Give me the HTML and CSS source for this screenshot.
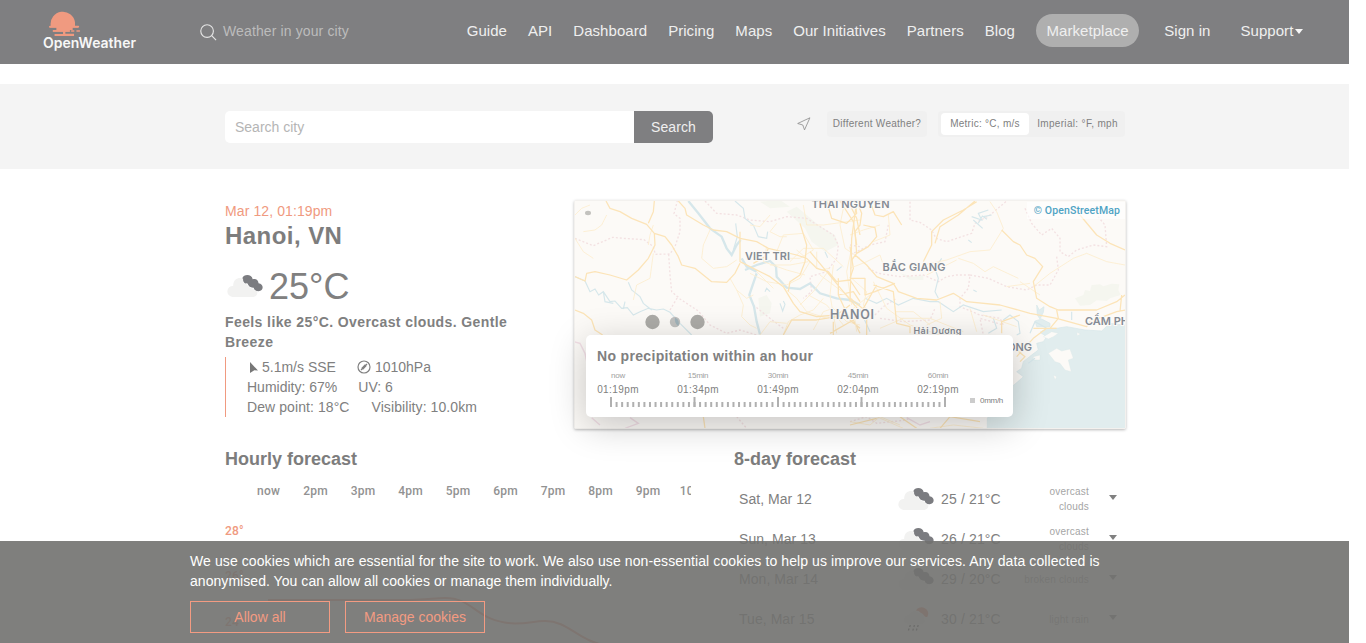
FILE: index.html
```html
<!DOCTYPE html>
<html lang="en">
<head>
<meta charset="utf-8">
<title>OpenWeather - Hanoi, VN</title>
<link rel="stylesheet" href="styles.css">
</head>
<body>
<svg width="0" height="0" class="defs">
  <symbol id="clouds" viewBox="0 0 105 68">
    <path fill="#7b7c80" d="M45 11 C48 -1 72 -2 75 14 C85 11 92 18 92 26 C108 27 108 49 92 49 C83 49 79 45 78 39 C68 40 62 34 60 27 C55 25 52 30 50 24 C46 21 44 16 45 11Z"/>
    <path fill="#f2f2f1" d="M16 66 A16 16 0 0 1 18 34 C18 10 38 8 47 13 C46 21 50 29 58 27 C61 37 68 42 77 41 C79 47 84 49 88 49 A13 13 0 0 1 77 66Z"/>
  </symbol>
  <symbol id="rain" viewBox="0 0 105 78">
    <path fill="#f39175" d="M52 16 A19 18 0 1 1 86 34 Q79 36 76 31 Q70 30 66 22 Q61 16 52 16Z"/>
    <path fill="#f2f2f1" d="M27 54 A12 12 0 0 1 31 30 A17 17 0 0 1 61 24 A12 12 0 0 1 76 40 Q82 52 72 54Z"/>
    <path stroke="#48484a" stroke-width="4" stroke-dasharray="6 5" d="M36 58l-6 17M48 58l-5 17M59 58l-6 17" fill="none"/>
  </symbol>
</svg>
<div class="page">
  <header class="header">
    <svg class="logo" viewBox="0 0 282 124">
      <path fill="#f09a80" d="M23 44 A36.500 36.500 0 1 1 96 34 V45 H106 V50 H89 V57 H80 V62 H67 V68 H93 V75 H35 V69 H60 V62 H30 V57 H40 V50 H19 V45 H23Z"/>
      <path stroke="#f09a80" stroke-width="5" stroke-linecap="round" d="M21 47h85M31 60h48M86 60h6M102 60h7M37 72h54"/>
      <text x="0" y="112" textLength="279" lengthAdjust="spacingAndGlyphs">OpenWeather</text>
    </svg>
    <div class="finder">
      <svg viewBox="0 0 18 18"><circle cx="7.500" cy="7.500" r="6.700"/><path d="M12.400 12.400L17 17"/></svg>
      <span>Weather in your city</span>
    </div>
    <nav class="nav">
      <a>Guide</a><a>API</a><a>Dashboard</a><a>Pricing</a><a>Maps</a><a>Our Initiatives</a><a>Partners</a><a>Blog</a>
      <a class="pill">Marketplace</a><a class="signin">Sign in</a><a class="support">Support<i class="caret"></i></a>
    </nav>
  </header>

  <section class="searchband">
    <div class="searchbox"><div class="field">Search city</div><div class="button">Search</div></div>
    <div class="controls">
      <svg class="locate" viewBox="0 0 14 14"><path d="M.7 6.500L12.900.8L7.500 12.900L5.800 8Z"/></svg>
      <div class="different">Different Weather?</div>
      <div class="units"><span class="on">Metric: °C, m/s</span><span class="off">Imperial: °F, mph</span></div>
    </div>
  </section>

  <main class="main">
    <section class="current">
      <div class="facts">
        <div class="date">Mar 12, 01:19pm</div>
        <h2>Hanoi, VN</h2>
        <div class="temp"><svg class="cloud"><use href="#clouds"/></svg><span>25°C</span></div>
        <div class="feels">Feels like 25°C. Overcast clouds. Gentle Breeze</div>
        <div class="details">
          <div class="line">
            <span class="wind"><svg viewBox="0 0 8 11"><path d="M0 0L8 8.500L4.300 8.200L0 11Z"/></svg>5.1m/s SSE</span>
            <span class="pressure"><svg viewBox="0 0 14 14"><circle cx="7" cy="7" r="6"/><path d="M4 10L10 4"/><path class="hand" d="M5.200 8.800L8.800 5.200"/></svg>1010hPa</span>
          </div>
          <div class="line"><span>Humidity: 67%</span><span>UV: 6</span></div>
          <div class="line"><span>Dew point: 18°C</span><span>Visibility: 10.0km</span></div>
        </div>
      </div>

      <div class="map">
        <svg class="mapart" viewBox="0 0 550 227">
          <rect width="550" height="227" fill="#fcfaf7"/>
          <g transform="translate(-5 -6) scale(.33333)">
            <path class="green" d="M650 50l30-15 30 25 35 30 50 30 10 30-40 20-40-30-20-40zM565 310l25-10 15 25-5 30-30 10zM570 20l60-5 30 20-60 5z"/>
            <path class="border" d="M15 130L70 152L128 127L160 130L190 132L222 134L250 155L256 178L300 177L315 155L330 110L330 70L312 56L322 18M296 178L300 240L305 290L330 312L385 348L420 390L470 415L510 405L560 420M300 345L325 303M405 18L440 55L500 60L540 75L600 80L650 65L710 70L750 95L790 120L805 150L800 190L770 230L720 245L725 290L700 310M550 330L600 370L640 400M500 665L530 700M840 150L870 155"/>
            <path class="pinkline" d="M12 440L30 445L45 475L50 500M65 668L90 690M180 668L205 685L165 700"/>
            <path class="river wide" d="M355 18L385 55L420 100L455 125L470 160L485 180L500 150L512 135M515 190L530 215L560 230M560 235L548 270L538 300L552 335L560 380L570 418M525 225L560 210L600 198L618 215L620 245L650 278L690 282L720 265L750 295L800 310L840 315L870 330"/>
            <path class="river" d="M15 245L45 258L60 290L75 282L86 300L100 290L120 320L135 318L155 340L172 338L190 360L210 350L235 340L260 345L280 342L300 352L330 385L365 420M100 290L105 320L130 325M175 262L185 285L210 305L220 325L245 345M160 342L165 320M495 18L520 40L525 70L550 90L565 125L590 130L593 110M585 290L590 280L600 290M630 325L638 348L645 328L640 318M765 170l8 18M815 215l-15 12M490 165l12-40-5-40"/>
            <path class="road small" d="M15 130L40 170L70 190M110 60L95 90L75 105L40 110M250 90L240 120L235 150M190 315L200 270L240 250L250 175M15 60L35 40L60 30M420 105L400 150L395 190L430 220L470 215L500 195M480 250L500 285L530 310L550 300M500 285L520 330L515 365L540 390L560 400M570 420L600 380L650 385M600 60L570 95L540 90M620 85L600 110L630 125L650 125M600 210L660 210L715 200M700 30L710 90L760 90L870 75M640 420L655 380L690 360L730 345L760 310M650 285L680 310L710 350L770 370M540 235L590 260L650 270L690 250L720 200M820 40L810 90L825 160L870 190M730 405L760 350L790 340L830 380L870 390"/>
            <path class="road small" d="M590 155L580 200L650 225L705 240M640 120L620 170L650 190L690 190L730 165L700 115L640 120M660 200L700 160L760 160L820 215M680 165L750 225L780 220M740 170L740 220M560 230L610 280M770 235L730 290L690 330M715 300L770 330L820 390M790 210L780 300L800 415M750 240L850 315M845 160L830 230L845 330"/>
            <path class="road" d="M108 18L120 40L150 50L185 70L230 88L253 115L285 125L305 150L325 185L335 210L375 220L425 260L470 262L495 235L510 205M235 85L250 50L253 18M253 115L255 150L235 190L205 225L170 255L120 240L75 230L50 235L45 258L15 245M15 345L40 355L65 375L75 405L98 420M325 18L345 40L350 60L400 90L430 105L470 110L510 130L560 140L595 160L680 180L710 190L740 220L775 230L800 260L840 255L870 300M510 110V200L550 220L600 245L640 275L670 325L690 350L740 365L800 360L840 330M595 160L585 185L550 205M655 290L660 260L690 240L705 200L710 150L690 85M640 420L665 375L740 375L830 360M770 18L785 70L830 85L860 55L855 18M835 20L860 70L870 120M810 18L850 80L860 150M840 155L850 220L840 250M805 250V300L850 290L870 320M805 300L840 375L870 400M720 170L770 230L870 350M500 490L510 465M400 665L405 700M790 380v40M780 415l70-40 20 40"/>
          </g>
          <g transform="translate(275 -6) scale(.33333)">
            <path class="water" d="M870 400L820 390L780 385L755 408L705 405L650 395L620 400L590 400L570 412L590 425L580 440L560 445L565 465L545 480L520 500L515 520L500 530L520 545L515 550L480 580L460 610L440 625L412 670V710H870ZM555 378L575 372L600 385L600 395L560 395ZM560 330L568 345L582 335L580 352L570 372L562 360Z"/>
            <path class="land" d="M595 475L620 460L635 468L660 462L670 490L655 495L660 515L664 530L645 525L630 505L615 500ZM580 425L605 410L625 415L610 425L595 432ZM550 485L570 480L570 495H550ZM610 540l10 5-5 10zM680 412l12 5-10 5z"/>
            <path class="green" d="M675 310L700 300L705 285L720 288L725 270L750 268L760 274L785 266L808 268L805 285L812 300L780 310L770 318L740 316L720 330L690 332Z"/>
            <path class="green" d="M150 235L190 245L220 240L220 255L180 255Z"/>
            <path class="border" d="M180 20V75L210 82L245 105L258 130L290 140L320 130L365 115L375 85L420 60L470 18M525 40L545 85L575 120L605 100L630 130L630 170L655 185L680 165L730 150L770 155L765 90L740 60M55 220L85 235L150 245L220 240L265 260L290 245L320 240L360 240L355 280L330 310L330 335L390 360L450 370L460 390L390 370L400 420M620 185L625 225L600 270L560 270L530 285L470 275L415 250L360 240M90 370L160 380L240 375L255 340M75 360L100 335L140 310M115 90L105 140L60 150L0 180M0 680L50 665L80 685L170 675L180 665"/>
            <path class="pinkline" d="M170 668L210 690L240 680"/>
            <path class="river" d="M365 65L395 75L385 55L415 45M370 75l28 25M385 85l12-22 14 10M355 135l10 8M400 65l25-5M370 285l10 5M275 190L255 220L265 250L255 290L265 310M45 310L80 325L110 310L145 330L190 310L240 320L265 320L310 350L340 330L400 350L455 345M460 375L480 360L505 380L510 415L500 420M415 415L440 400L430 370M665 350v25M540 415L555 380L590 400M555 490L535 505M0 370L30 345L60 410"/>
            <path class="road small" d="M0 120L40 105L90 90M220 210L290 195L360 170L420 165L460 100L440 50L420 20M370 205L405 230L430 215L505 250M230 240L320 195M470 275L540 265M550 275L600 235L670 190L710 175L770 200L825 210M325 190L370 205M0 220L50 200L90 180L100 210M5 250L50 290L40 330L70 370M70 260L110 340L180 390L270 420M150 370L240 370L340 410M270 320L275 370L230 390M60 300L10 340L20 410M135 350L190 350L240 390M360 340L380 410M400 360L500 395M70 140L120 120L115 60M510 260L570 300M90 400L160 370M0 680L60 690L90 665L150 690M80 665L160 700M240 700L310 690L400 700"/>
            <path class="road" d="M20 18L35 55L30 90L15 110L20 175L5 195M60 18L75 60L100 65L130 50L155 90M40 90L75 98L80 125L55 155L20 175M15 180L50 210L80 245L130 265L145 290L200 310L260 315L310 295L350 320L450 330L540 355L620 370L710 395L720 380L800 350L825 345M380 20L340 45L280 75L245 110L245 150L220 200M375 18L325 60L270 95L255 145M455 105L490 140L510 150L530 180L555 190L578 215L550 260L560 310L600 335L625 345L740 345L800 320L825 300M690 60L740 120L780 145L825 165M0 250L45 250L45 300L75 290L135 265M70 270L130 290L140 385L180 395V415M455 415L455 380L510 360M500 485L550 430L590 400L620 400M620 345L625 370L600 400L550 400M810 350L815 300M500 465L525 485L510 500M0 310L50 350L50 420M20 20L5 130L0 320M40 340L80 270M0 690L80 670M150 665L200 700M390 680L300 665L270 700"/>
          </g>
          <g class="labels">
            <text x="236.500" y="7" textLength="78">THAI NGUYEN</text>
            <text x="170" y="59" textLength="45">VIET TRI</text>
            <text x="255" y="118" class="city" textLength="44">HANOI</text>
            <text x="307.500" y="69.500" textLength="63">BẮC GIANG</text>
            <text x="338.500" y="133" class="town" textLength="48">Hải Dương</text>
            <text x="510" y="123.500">CẨM PHẢ</text>
            <text x="396" y="150" textLength="61">HAI PHONG</text>
          </g>
          <ellipse cx="13" cy="12" rx="3" ry="2.200" fill="#c3c2be"/>
          <circle cx="77.500" cy="121" r="7.200" fill="#acaba7"/>
          <circle cx="100" cy="121" r="5.200" fill="#c0c1bf"/>
          <path class="leaf" d="M100 116.500Q106 120 103 125Q99 122 100 116.500Z"/>
          <circle cx="122.500" cy="121" r="7.200" fill="#acaba7"/>
        </svg>
        <div class="osm">© OpenStreetMap</div>
        <div class="rainbox">
          <h4>No precipitation within an hour</h4>
          <div class="times">
            <div><small>now</small>01:19pm</div><div><small>15min</small>01:34pm</div><div><small>30min</small>01:49pm</div><div><small>45min</small>02:04pm</div><div><small>60min</small>02:19pm</div>
          </div>
          <div class="scale">
            <svg class="ticks" viewBox="0 0 336 10"><path d="M0 7.500H336" stroke-width="5" stroke-dasharray="2 3.567"/><path d="M0 5H336" stroke-width="10" stroke-dasharray="2 81.500"/></svg>
            <i></i><span>0mm/h</span>
          </div>
        </div>
      </div>
    </section>

    <section class="forecasts">
      <div class="hourly">
        <h3>Hourly forecast</h3>
        <svg class="chart" viewBox="0 0 466 180">
          <g class="hours">
            <text x="43.500" y="23">now</text><text x="90.500" y="23">2pm</text><text x="138" y="23">3pm</text><text x="185.500" y="23">4pm</text><text x="233" y="23">5pm</text><text x="280.500" y="23">6pm</text><text x="328" y="23">7pm</text><text x="375.500" y="23">8pm</text><text x="423" y="23">9pm</text><text x="470.500" y="23">10pm</text>
          </g>
          <g class="degrees"><text x="0" y="63">28°</text><text x="0" y="108">26°</text><text x="0" y="154">24°</text></g>
          <path class="curve" d="M43 128H185C200 128 210 126 220 126C250 126 250 150 290 151.500C305 151.500 308 149 320 149C345 149 352 170 385 174"/>
        </svg>
      </div>
      <div class="daily">
        <h3>8-day forecast</h3>
        <div class="day"><span class="name">Sat, Mar 12</span><svg class="cloud"><use href="#clouds"/></svg><span class="range">25 / 21°C</span><span class="desc">overcast clouds</span><i class="caret"></i></div>
        <div class="day"><span class="name">Sun, Mar 13</span><svg class="cloud"><use href="#clouds"/></svg><span class="range">26 / 21°C</span><span class="desc">overcast clouds</span><i class="caret"></i></div>
        <div class="day"><span class="name">Mon, Mar 14</span><svg class="cloud"><use href="#clouds"/></svg><span class="range">29 / 20°C</span><span class="desc">broken clouds</span><i class="caret"></i></div>
        <div class="day"><span class="name">Tue, Mar 15</span><svg class="cloud wet"><use href="#rain"/></svg><span class="range">30 / 21°C</span><span class="desc">light rain</span><i class="caret"></i></div>
      </div>
    </section>
  </main>

  <aside class="cookies">
    <p>We use cookies which are essential for the site to work. We also use non-essential cookies to help us improve our services. Any data collected is <span class="rest">anonymised. You can allow all cookies or manage them individually.</span></p>
    <div class="choices"><div>Allow all</div><div>Manage cookies</div></div>
  </aside>
</div>
</body>
</html>
```
FILE: styles.css
```css
* { box-sizing: border-box; }
body { margin: 0; background: #fff; font-family: "Liberation Sans", Arial, sans-serif; font-size: 14px; line-height: 20px; color: #808080; overflow: hidden; }
h2, h3, h4, p { margin: 0; }
svg { display: block; flex: none; }
.defs { position: absolute; }
.page { position: relative; width: 1349px; height: 643px; overflow: hidden; }

.header { display: flex; align-items: center; height: 64px; background: #7f7f81; padding-left: 43px; color: #efefef; }
.logo { width: 94px; height: 41.300px; margin-bottom: 1px; }
.logo text { font: 600 42px "Inter", sans-serif; fill: #f7f7f7; }
.finder { display: flex; align-items: center; gap: 6px; width: 266px; margin-left: 63px; padding-bottom: 2px; font-size: 14px; letter-spacing: .12px; color: #bcbcbc; }
.finder svg { width: 17px; height: 17px; fill: none; stroke: #e5e5e5; stroke-width: 1.200; margin-top: 2px; }
.finder span { white-space: nowrap; }
.nav { display: flex; align-items: center; gap: 21px; margin-left: .7px; font-size: 15px; letter-spacing: .05px; white-space: nowrap; padding-bottom: 3px; }
.pill { background: #afafaf; border-radius: 17px; height: 33px; line-height: 34px; padding: 0 10.500px; }
.signin { margin-left: 4px; }
.support { display: flex; align-items: center; gap: 2px; margin-left: 9px; }
.caret { width: 0; height: 0; border: 4.500px solid transparent; border-top: 5.500px solid #808080; border-bottom: 0; }
.support .caret { border-top-color: #f7f7f7; margin-top: 2px; }

.searchband { display: flex; justify-content: space-between; height: 85px; margin-top: 20px; padding: 27px 224px 0 225px; background: #f4f4f4; }
.searchbox { display: flex; width: 488px; height: 32px; line-height: 33px; border-radius: 5px; overflow: hidden; background: #fff; }
.field { flex: 1; padding-left: 10px; color: #b5b5b5; }
.button { width: 79px; text-align: center; background: #7f7f81; color: #f0f0f0; letter-spacing: .1px; }
.controls { display: flex; height: 26px; font-size: 10px; letter-spacing: .27px; white-space: nowrap; }
.locate { width: 14px; height: 14px; fill: none; stroke: #8c8c8c; stroke-width: .8; margin: 6px 16px 0 0; }
.different { width: 100px; text-align: center; line-height: 26px; background: #f0f0f0; border-radius: 4px; margin-right: 11px; }
.units { display: flex; align-items: center; width: 187px; padding: 0 3px; background: #f0f0f0; border-radius: 4px; text-align: center; line-height: 22px; }
.on { width: 88px; background: #fff; border-radius: 4px; }
.off { flex: 1; padding-left: 4px; letter-spacing: .33px; }

.main { width: 901px; margin-left: 225px; padding-top: 32px; }
.current { display: flex; justify-content: space-between; height: 227px; }
.facts { width: 310px; }
.date { color: #f09a80; letter-spacing: .1px; }
h2 { font-size: 24px; line-height: 30px; letter-spacing: .45px; color: #7d7d7d; }
.temp { display: flex; align-items: center; height: 51px; margin-top: 10px; font-size: 36px; }
.temp .cloud { margin: 0 6px 2px 2px; }
.cloud { width: 36px; height: 24px; }
.wet { height: 27px; }
.feels { font-weight: bold; letter-spacing: .4px; width: 300px; }
.details { border-left: 1px solid #f09a80; margin-top: 5px; padding-left: 21px; height: 60px; }
.line { display: flex; gap: 22px; white-space: nowrap; letter-spacing: .08px; }
.line:nth-child(2) { gap: 21px; letter-spacing: 0; }
.wind, .pressure { display: flex; align-items: center; gap: 4px; letter-spacing: 0; }
.wind { margin-right: -1px; }
.wind svg { width: 8px; height: 11px; fill: #777; margin-left: 3px; }
.pressure svg { width: 14px; height: 14px; fill: none; stroke: #808080; stroke-width: 1.200; }
.pressure .hand { stroke-width: 2.400; }

.map { position: relative; width: 552px; height: 229px; margin-top: -1px; flex: none; border: 1px solid #f3f1ee; border-radius: 2px; box-shadow: 0 1px 3px rgba(0,0,0,.28); }
.mapart { width: 550px; height: 227px; overflow: hidden; }
.mapart path { fill: none; }
.mapart .green { fill: #f5f6ef; }
.mapart .water { fill: #e1edee; stroke: #d6e7ea; stroke-width: 2; }
.mapart .land { fill: #fcfaf7; stroke: #d8e6e8; }
.mapart .leaf { fill: #a0b2b9; }
.border { stroke: #f3e1e2; stroke-width: 4; stroke-dasharray: 6 6; }
.pinkline { stroke: #f2dfe6; stroke-width: 4; }
.river { stroke: #d6e7eb; stroke-width: 3.500; }
.river.wide { stroke-width: 7; }
.road { stroke: #fce4b8; stroke-width: 3.800; stroke-linejoin: round; }
.road.small { stroke: #fdeecf; stroke-width: 2.600; }
.labels { font: 600 11px "Inter", sans-serif; fill: #858b94; paint-order: stroke; stroke: #fcfaf7; stroke-width: 2px; }
.labels .city { font-size: 12.500px; }
.labels .town { font-size: 9px; }
.osm { position: absolute; top: 1px; right: 0; height: 17px; padding: 0 5px 0 7px; line-height: 17px; background: rgba(255,255,255,.6); color: #4fa3c4; font-size: 10.500px; letter-spacing: .12px; font-weight: 500; font-family: Roboto, sans-serif; }
.rainbox { position: absolute; left: 11px; top: 134px; width: 427px; height: 82px; padding: 11px; background: #fff; border-radius: 5px; box-shadow: 0 8px 36px rgba(0,0,0,.22); }
h4 { font-size: 14px; line-height: 20px; letter-spacing: .33px; }
.times { display: flex; gap: 38px; margin-top: 4px; font-size: 10px; line-height: 16px; letter-spacing: .4px; }
.times div { width: 42px; text-align: center; white-space: nowrap; }
.times small { display: block; font-size: 8px; line-height: 12px; letter-spacing: -.3px; color: #a0a0a0; }
.scale { display: flex; align-items: flex-end; margin: -4px -8px 0 13px; white-space: nowrap; font-size: 8px; line-height: 13px; letter-spacing: -.3px; }
.ticks { width: 336px; height: 10px; fill: none; stroke: #b0b0b0; }
.scale i { flex: none; width: 5px; height: 5px; background: #ccc; margin: 0 5px 4px 24px; }

.forecasts { display: flex; margin-top: 20px; }
h3 { font-size: 18px; line-height: 22px; color: #7d7d7d; }
.hourly { width: 509px; }
.chart { width: 466px; height: 180px; margin-top: 2px; overflow: hidden; }
.chart text { font: 500 12px Roboto, sans-serif; letter-spacing: .2px; }
.hours { fill: #929292; text-anchor: middle; }
.degrees { fill: #f09a80; }
.curve { fill: none; stroke: #f09a80; stroke-width: 2; }
.daily { width: 392px; }
.daily h3 { margin-bottom: 9px; }
.day { display: flex; align-items: center; height: 40px; padding-left: 5px; }
.day .cloud { margin-bottom: 1px; }
.name { width: 159px; letter-spacing: .05px; }
.range { width: 74px; margin-left: 7px; white-space: nowrap; letter-spacing: .15px; }
.desc { width: 74px; padding-left: 5px; font-size: 10px; line-height: 15px; letter-spacing: .2px; text-align: right; color: #a5a5a5; }
.day .caret { margin-left: 20px; margin-bottom: 3px; }

.cookies { position: absolute; left: 0; bottom: 0; width: 1349px; height: 102px; padding: 10px 190px; background: rgba(113,113,111,.9); color: #fff; }
.cookies p { width: 920px; letter-spacing: .095px; }
.rest { letter-spacing: .05px; }
.choices { display: flex; gap: 15px; margin-top: 10px; color: #f39b82; text-align: center; line-height: 31px; }
.choices div { width: 140px; height: 32px; border: 1px solid #f39b82; }
```
